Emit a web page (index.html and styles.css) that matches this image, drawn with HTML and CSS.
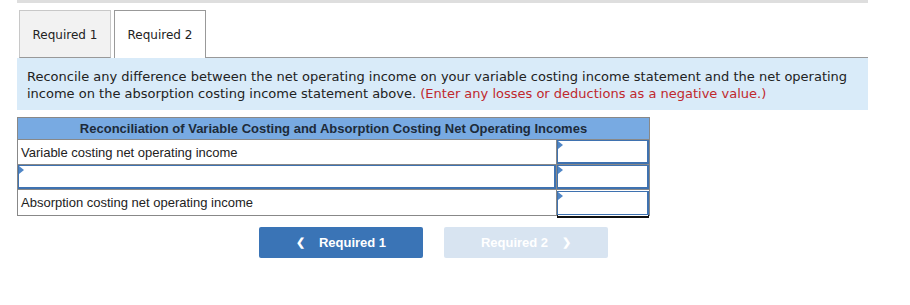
FILE: index.html
```html
<!DOCTYPE html>
<html lang="en">
<head>
  <meta charset="UTF-8">
  <title>Required 2</title>
  <link rel="stylesheet" href="styles.css">
</head>
<body>
  <div class="page">
    <div class="top-bar"></div>
    <nav class="tabs">
      <div class="tab">Required 1</div>
      <div class="tab active">Required 2</div>
      <div class="tab-rest"></div>
    </nav>
    <p class="instructions">Reconcile any difference between the net operating income on your variable costing income statement and the net operating income on the absorption costing income statement above. <span class="note">(Enter any losses or deductions as a negative value.)</span></p>
    <table class="recon">
      <thead>
        <tr><th colspan="2">Reconciliation of Variable Costing and Absorption Costing Net Operating Incomes</th></tr>
      </thead>
      <tbody>
        <tr>
          <td class="label">Variable costing net operating income</td>
          <td class="amount"><div class="input"></div></td>
        </tr>
        <tr>
          <td class="label blank"><div class="input"></div></td>
          <td class="amount"><div class="input"></div></td>
        </tr>
        <tr class="total-row">
          <td class="label">Absorption costing net operating income</td>
          <td class="amount total"><div class="input"></div></td>
        </tr>
      </tbody>
    </table>
    <div class="nav-buttons">
      <button class="btn prev"><span class="chev">&#x276E;</span> Required 1</button>
      <button class="btn next" disabled>Required 2 <span class="chev">&#x276F;</span></button>
    </div>
  </div>
</body>
</html>
```

FILE: styles.css
```css
body {
  margin: 0;
  background: #fff;
  color: #222;
  font-family: "DejaVu Sans", Verdana, sans-serif;
}
.page {
  width: 851px;
  padding-left: 17px;
}
.top-bar {
  height: 3px;
  background: #dedede;
}
.tabs {
  display: flex;
  align-items: flex-end;
  margin-top: 7px;
  height: 48px;
}
.tab {
  box-sizing: border-box;
  width: 92px;
  height: 48px;
  margin-left: 2px;
  display: flex;
  align-items: center;
  justify-content: center;
  padding-top: 1px;
  font-size: 12px;
  color: #222;
  background: #f2f2f2;
  border: 1px solid #c8c8c8;
  border-bottom: 1px solid #999;
}
.tab + .tab {
  margin-left: 3px;
}
.tab.active {
  background: #fff;
  border: 1px solid #999;
  border-bottom: none;
}
.tab-rest {
  flex: 1;
  border-bottom: 1px solid #999;
}
.instructions {
  margin: 0;
  background: #d9ebf9;
  padding: 10px 10px 8px 10px;
  font-size: 13px;
  line-height: 17px;
  color: #222;
}
.note {
  color: #c0282d;
}
.recon {
  margin-top: 7px;
  width: 633px;
  border-collapse: collapse;
  font-family: "Liberation Sans", Arial, sans-serif;
  font-size: 13px;
  border: 1px solid #888;
}
.recon th {
  background: #78aae2;
  font-weight: bold;
  font-size: 13px;
  color: #1d2b3a;
  height: 21px;
  padding: 0;
  border-bottom: 1px solid #888;
}
.recon td {
  padding: 0;
  height: 24px;
  border-top: 1px solid #888;
}
.recon .total-row td {
  height: 25px;
}
.recon td.label {
  padding: 0 0 0 3px;
  color: #222;
}
.recon td.label.blank {
  padding: 0;
}
.recon td.amount {
  width: 92px;
  border-left: 1px solid #888;
  padding: 0;
}
.input {
  position: relative;
  box-sizing: border-box;
  height: 24px;
  border: 2px solid #3f72b0;
  border-width: 1px 2px 2px 1px;
  background: #fff;
}
.input::before {
  content: "";
  position: absolute;
  left: 0;
  top: 0;
  border-top: 4px solid transparent;
  border-bottom: 4px solid transparent;
  border-left: 5px solid #4f86c6;
}
.total .input {
  border-bottom: 1px solid #3f72b0;
  box-shadow: 0 2px 0 -1px #fff, 0 1px 0 0 #111, 0 3px 0 0 #111;
}
.nav-buttons {
  display: flex;
  gap: 21px;
  margin: 11px 0 0 242px;
}
.btn {
  width: 164px;
  height: 31px;
  border: none;
  border-radius: 2px;
  font-family: "Liberation Sans", Arial, sans-serif;
  font-size: 13px;
  font-weight: bold;
  color: #fff;
  display: flex;
  align-items: center;
  justify-content: center;
  gap: 14px;
}
.btn.prev {
  background: #3a74b6;
}
.btn.next {
  background: #d8e4f1;
}
.chev {
  font-size: 11px;
}
```
